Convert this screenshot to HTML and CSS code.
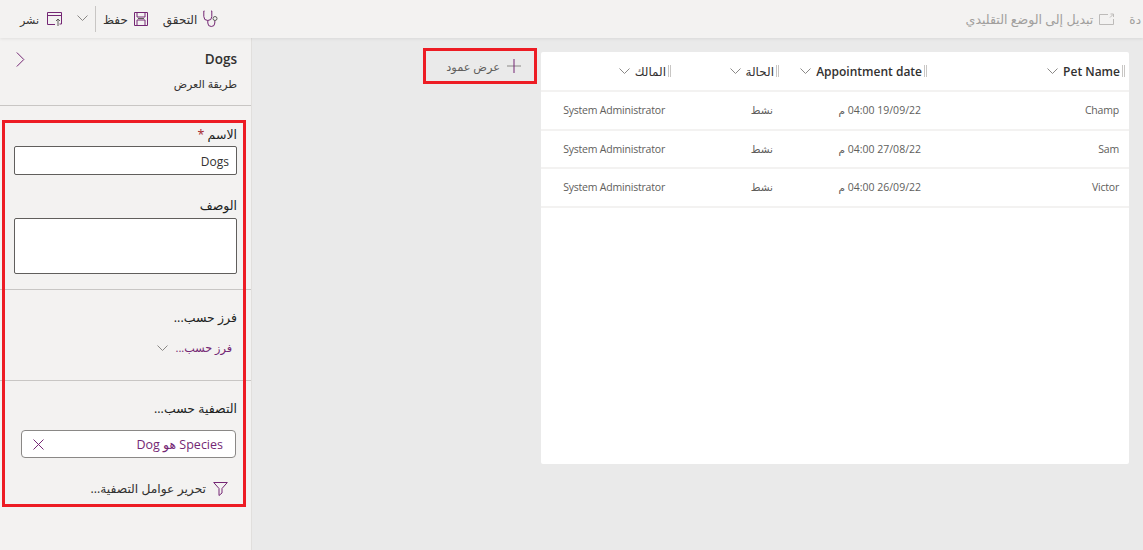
FILE: index.html
```html
<!DOCTYPE html>
<html lang="ar" dir="rtl">
<head>
    <meta charset="UTF-8">
    <title>Dogs</title>
    <link rel="stylesheet" href="styles.css">
</head>
<body>
    <div class="toolbar">
        <span class="tool disabled back">دة</span>
        <span class="tool disabled switch">
            <svg width="15" height="12" viewBox="0 0 15 12"><path d="M9 1.500H.5v10h14V6M11 4.500l3-3M11.500 1h3v3" fill="none" stroke="#bdbbb9"/></svg>
            تبديل إلى الوضع التقليدي
        </span>
        <span class="spacer"></span>
        <span class="tool validate">
            <svg width="18" height="18" viewBox="0 0 18 18"><path d="M1.500 1H.8v5.500a4 4 0 0 0 8 0V1H8M4.800 10.500V13a3.500 3.500 0 0 0 7 0v-2.500" fill="none" stroke="#742774"/><circle cx="12" cy="8.500" r="2" fill="none" stroke="#605e5c"/></svg>
            التحقق
        </span>
        <span class="tool save">
            <svg width="14" height="14" viewBox="0 0 14 14"><path d="M.5.5h13v13H.5zM3 .5v4.500h8V.5M3 13.500V8h8v5.500" fill="none" stroke="#742774"/><path d="M4 6h6v1H4z" fill="#605e5c"/></svg>
            حفظ
        </span>
        <span class="sep"></span>
        <svg class="tool-chev" width="11" height="6" viewBox="0 0 11 6"><path d="M.5.5l5 5 5-5" fill="none" stroke="#8a8886"/></svg>
        <span class="tool publish">
            <svg width="15" height="14" viewBox="0 0 15 14"><path d="M8 12.500H.5V.5h14V12h-2M.5 3.500h14" fill="none" stroke="#742774"/><path d="M11 14V7M9 9l2-2 2 2" fill="none" stroke="#605e5c"/></svg>
            نشر
        </span>
    </div>

    <div class="content">
        <aside class="panel">
            <div class="panel-head">
                <div class="panel-title">
                    <span class="dogs">Dogs</span>
                    <svg width="9" height="15" viewBox="0 0 9 15"><path d="M.8.5l7 7-7 7" fill="none" stroke="#742774"/></svg>
                </div>
                <div class="panel-sub">طريقة العرض</div>
            </div>
            <div class="panel-section fields">
                <label class="label">الاسم <span class="req">*</span></label>
                <input class="text-input" type="text" value="Dogs">
                <label class="label desc-label">الوصف</label>
                <textarea class="text-area"></textarea>
            </div>
            <div class="panel-section sort">
                <div class="label">فرز حسب...</div>
                <div class="sort-pick">
                    <span>فرز حسب...</span>
                    <svg width="11" height="6" viewBox="0 0 11 6"><path d="M.5.5l5 5 5-5" fill="none" stroke="#8a8886"/></svg>
                </div>
            </div>
            <div class="panel-section filter">
                <div class="label">التصفية حسب...</div>
                <div class="chip">
                    <span class="chip-text">Species هو Dog</span>
                    <svg width="11" height="11" viewBox="0 0 11 11"><path d="M.5.5l10 10M10.500.5l-10 10" fill="none" stroke="#742774"/></svg>
                </div>
                <div class="edit-filter">
                    <svg width="15" height="14" viewBox="0 0 15 14"><path d="M.7.5h13.600L9 6.500v4.500l-3 2.500V6.500z" fill="none" stroke="#742774"/></svg>
                    تحرير عوامل التصفية...
                </div>
            </div>
        </aside>

        <main class="main">
            <div class="card">
                <div class="row head">
                    <div class="cell"><i class="grip"></i><span>Pet Name</span><svg class="chev" width="11" height="6" viewBox="0 0 11 6"><path d="M.5.5l5 5 5-5" fill="none" stroke="#8a8886"/></svg></div>
                    <div class="cell"><i class="grip"></i><span>Appointment date</span><svg class="chev" width="11" height="6" viewBox="0 0 11 6"><path d="M.5.5l5 5 5-5" fill="none" stroke="#8a8886"/></svg></div>
                    <div class="cell"><i class="grip"></i><span class="head-ar">الحالة</span><svg class="chev" width="11" height="6" viewBox="0 0 11 6"><path d="M.5.5l5 5 5-5" fill="none" stroke="#8a8886"/></svg></div>
                    <div class="cell"><i class="grip"></i><span class="head-ar">المالك</span><svg class="chev" width="11" height="6" viewBox="0 0 11 6"><path d="M.5.5l5 5 5-5" fill="none" stroke="#8a8886"/></svg></div>
                </div>
                <div class="row">
                    <div class="cell">Champ</div>
                    <div class="cell">19/09/22 04:00 م</div>
                    <div class="cell">نشط</div>
                    <div class="cell">System Administrator</div>
                </div>
                <div class="row">
                    <div class="cell">Sam</div>
                    <div class="cell">27/08/22 04:00 م</div>
                    <div class="cell">نشط</div>
                    <div class="cell">System Administrator</div>
                </div>
                <div class="row">
                    <div class="cell">Victor</div>
                    <div class="cell">26/09/22 04:00 م</div>
                    <div class="cell">نشط</div>
                    <div class="cell">System Administrator</div>
                </div>
            </div>
            <div class="add-col">
                <svg width="14" height="14" viewBox="0 0 14 14"><path d="M0 7h14" stroke="#8a8886"/><path d="M7 0v14" stroke="#742774"/></svg>
                عرض عمود
            </div>
        </main>
    </div>

    <div class="mark mark-panel"></div>
    <div class="mark mark-add"></div>
</body>
</html>
```

FILE: styles.css
```css
* {
    box-sizing: border-box;
}
body {
    margin: 0;
    height: 550px;
    overflow: hidden;
    display: flex;
    flex-direction: column;
    background: #eaeaea;
    color: #323130;
    font-family: "Open Sans", "DejaVu Sans", sans-serif;
    font-size: 12px;
}
.toolbar {
    height: 38px;
    flex: none;
    display: flex;
    align-items: center;
    padding: 0 2px 0 20px;
    background: #f3f2f1;
    box-shadow: 0 1px 3px rgba(0, 0, 0, 0.08);
    position: relative;
}
.spacer {
    flex: 1;
}
.tool {
    display: flex;
    align-items: center;
    gap: 6px;
    white-space: nowrap;
}
.disabled {
    color: #a19f9d;
}
.back {
    margin-left: 15px;
}
.switch {
    font-size: 12.600px;
}
.validate {
    margin-left: 15px;
}
.publish {
    font-size: 11px;
    gap: 8px;
}
.sep {
    width: 1px;
    height: 26px;
    background: #c8c6c4;
    margin: 0 7px;
}
.tool-chev {
    margin-left: 15px;
    margin-bottom: 2px;
}
.content {
    flex: 1;
    display: flex;
    flex-direction: row-reverse;
    min-height: 0;
}
.panel {
    width: 252px;
    flex: none;
    background: #f3f2f1;
    border-right: 1px solid #e1dfdd;
}
.panel-head {
    height: 68px;
    padding: 12px 14px 0 0;
    border-bottom: 1px solid #c8c6c4;
}
.panel-title {
    display: flex;
    justify-content: space-between;
    align-items: center;
    padding-left: 16px;
    font-size: 13.500px;
    font-weight: 600;
}
.panel-sub {
    margin-top: 8px;
    font-size: 11px;
}
.panel-section {
    padding: 0 14px;
    border-bottom: 1px solid #c8c6c4;
}
.fields {
    height: 184px;
    padding-top: 20px;
}
.label {
    display: block;
    font-size: 12.500px;
    color: #201f1e;
    line-height: 18px;
}
.req {
    color: #a4262c;
}
.text-input, .text-area {
    display: block;
    width: 223px;
    border: 1px solid #605e5c;
    border-radius: 2px;
    background: white;
    font: inherit;
    color: #323130;
    padding: 1px 7px 0;
    outline: none;
    resize: none;
}
.text-input {
    height: 29px;
    margin-top: 2px;
}
.desc-label {
    margin-top: 22px;
}
.text-area {
    height: 56px;
    margin-top: 3px;
}
.sort {
    height: 91px;
    padding-top: 19px;
}
.sort-pick {
    display: flex;
    align-items: center;
    gap: 7px;
    margin-top: 13px;
    padding-right: 5px;
    font-size: 11.200px;
    color: #742774;
}
.filter {
    border-bottom: none;
    padding-top: 19px;
}
.chip {
    height: 28px;
    margin-top: 12px;
    margin-right: 1px;
    width: 215px;
    padding: 0 12px 0 11px;
    display: flex;
    justify-content: space-between;
    align-items: center;
    background: white;
    border: 1px solid #8a8886;
    border-radius: 4px;
}
.chip-text {
    font-size: 12.500px;
    color: #742774;
}
.edit-filter {
    display: flex;
    align-items: center;
    gap: 7px;
    margin-top: 22px;
    padding-right: 9px;
    font-size: 12.300px;
}
.main {
    flex: 1;
    display: flex;
    padding: 14px 14px 0 0;
    align-items: flex-start;
}
.card {
    width: 588px;
    height: 412px;
    flex: none;
    background: white;
    border-radius: 2px;
}
.row {
    display: grid;
    grid-template-columns: 198px 148px 108px 134px;
    height: 38.500px;
    align-items: center;
    border-bottom: 2px solid #f3f2f1;
    color: #605e5c;
    font-size: 10.500px;
    letter-spacing: -0.2px;
}
.row.head {
    height: 40px;
    color: #323130;
    font-size: 12px;
    font-weight: 600;
    letter-spacing: 0;
}
.cell {
    padding-right: 10px;
    white-space: nowrap;
    display: flex;
    align-items: center;
}
.head .cell {
    padding-right: 4px;
}
.head-ar {
    font-weight: 400;
}
.grip {
    width: 3px;
    height: 12px;
    margin-left: 2px;
    border-left: 1px solid #c8c6c4;
    border-right: 1px solid #c8c6c4;
}
.chev {
    margin-right: 5px;
}
.add-col {
    width: 114px;
    height: 36px;
    margin-top: -4px;
    margin-right: 4px;
    flex: none;
    display: flex;
    align-items: center;
    gap: 7px;
    padding-right: 16px;
    font-size: 11.300px;
    color: #605e5c;
}
.mark {
    position: absolute;
    border: 3px solid #ed1c24;
}
.mark-panel {
    left: 2px;
    top: 120px;
    width: 244px;
    height: 387px;
}
.mark-add {
    left: 423px;
    top: 48px;
    width: 114px;
    height: 36px;
}
```
